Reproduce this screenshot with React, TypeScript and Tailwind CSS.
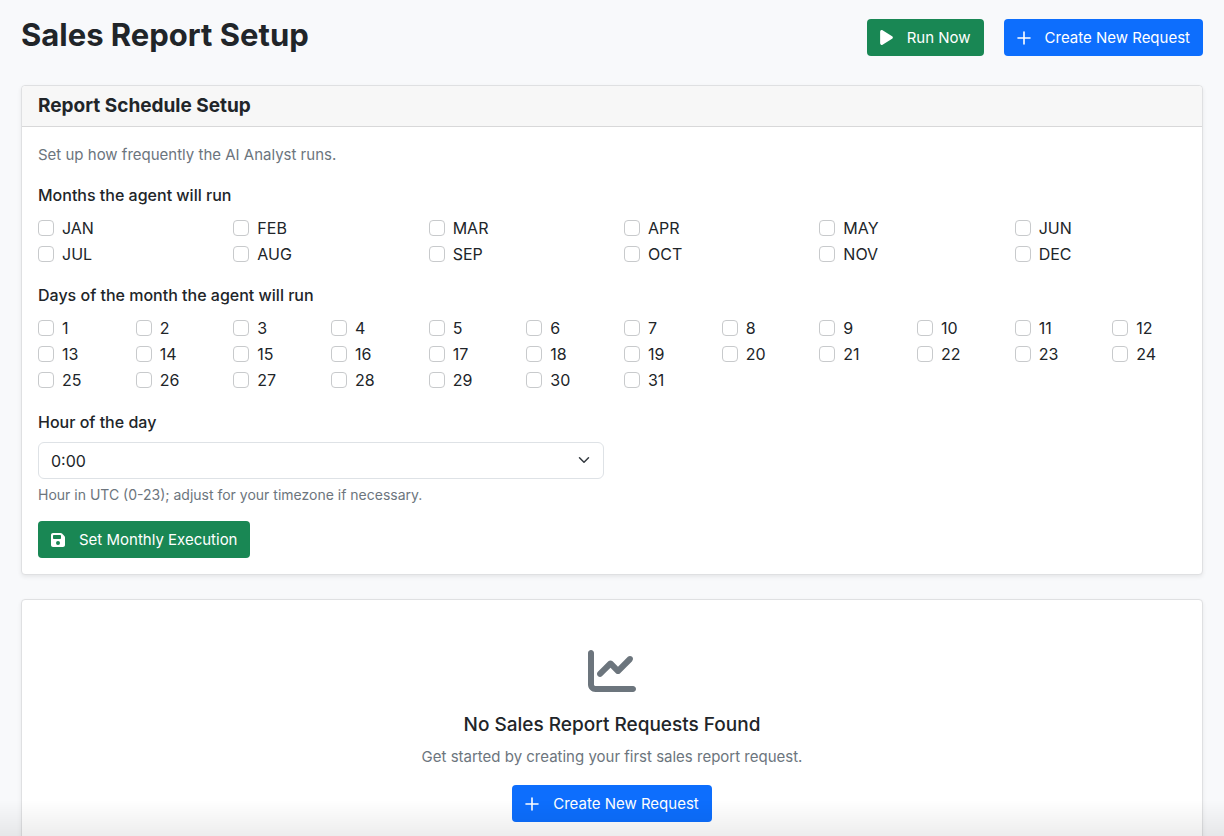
import { useState } from "react";
import type { ReactNode } from "react";

const MONTHS = ["JAN", "FEB", "MAR", "APR", "MAY", "JUN", "JUL", "AUG", "SEP", "OCT", "NOV", "DEC"];
const DAYS = Array.from({ length: 31 }, (_, i) => String(i + 1));
const HOURS = Array.from({ length: 24 }, (_, i) => `${i}:00`);

function PlayIcon() {
  return (
    <svg viewBox="0 0 384 512" className="h-[17px] w-[13px] shrink-0" fill="currentColor" aria-hidden="true">
      <path d="M73 39c-14.800-9.100-33.400-9.400-48.500-.9S0 62.600 0 80V432c0 17.400 9.400 33.400 24.500 41.900s33.700 8.100 48.500-.9L361 297c14.300-8.700 23-24.200 23-41s-8.700-32.200-23-41L73 39z" />
    </svg>
  );
}

function PlusIcon() {
  return (
    <svg viewBox="0 0 14 14" className="size-[14px] shrink-0" fill="none" stroke="currentColor" strokeWidth="1.600" strokeLinecap="round" aria-hidden="true">
      <path d="M7 1v12M1 7h12" />
    </svg>
  );
}

function SaveIcon() {
  return (
    <svg viewBox="0 32 448 448" className="size-[14px] shrink-0" fill="currentColor" aria-hidden="true">
      <path d="M64 32C28.700 32 0 60.700 0 96V416c0 35.300 28.700 64 64 64H384c35.300 0 64-28.700 64-64V173.300c0-17-6.700-33.300-18.700-45.300L352 50.700C340 38.700 323.700 32 306.700 32H64zm0 96c0-17.700 14.300-32 32-32H288c17.700 0 32 14.300 32 32v64c0 17.700-14.300 32-32 32H96c-17.700 0-32-14.300-32-32V128zM224 288a64 64 0 1 1 0 128 64 64 0 1 1 0-128z" />
    </svg>
  );
}

function ChartIcon() {
  return (
    <svg viewBox="0 0 512 512" className="size-12" fill="currentColor" aria-hidden="true">
      <path d="M64 64c0-17.700-14.300-32-32-32S0 46.300 0 64V400c0 44.200 35.800 80 80 80H480c17.700 0 32-14.300 32-32s-14.300-32-32-32H80c-8.800 0-16-7.200-16-16V64zm406.600 86.600c12.500-12.500 12.500-32.800 0-45.300s-32.800-12.500-45.300 0L320 210.700l-57.400-57.400c-12.500-12.500-32.800-12.500-45.300 0l-112 112c-12.500 12.500-12.500 32.800 0 45.300s32.800 12.500 45.300 0L240 221.300l57.400 57.400c12.500 12.500 32.800 12.500 45.300 0l128-128z" />
    </svg>
  );
}

function Button({ tone, icon, children }: { tone: "green" | "blue"; icon: ReactNode; children: ReactNode }) {
  const color = tone === "green" ? "bg-[#198754] hover:bg-[#157347]" : "bg-[#0d6efd] hover:bg-[#0b5ed7]";
  return (
    <button type="button" className={`inline-flex items-center gap-[14px] rounded px-[13px] py-[7px] text-[15px] leading-[23px] text-white ${color}`}>
      {icon}
      {children}
    </button>
  );
}

function Check({ group, label }: { group: string; label: string }) {
  const id = `${group}-${label}`;
  return (
    <div className="flex h-[26px] items-center gap-2">
      <input
        id={id}
        type="checkbox"
        className="size-4 shrink-0 appearance-none rounded border border-[#c8cacc] bg-white checked:border-[#0d6efd] checked:bg-[#0d6efd]"
      />
      <label htmlFor={id}>{label}</label>
    </div>
  );
}

export default function App() {
  const [hour, setHour] = useState("0:00");
  return (
    <div className="min-h-screen bg-[#f8f9fb] px-[21px] pt-[19px] font-['Inter','Liberation_Sans',sans-serif] text-base text-[#212529]">
      <header className="flex items-start justify-between">
        <h1 className="text-[31px] leading-8 font-bold">Sales Report Setup</h1>
        <div className="flex gap-5">
          <Button tone="green" icon={<PlayIcon />}>Run Now</Button>
          <Button tone="blue" icon={<PlusIcon />}>Create New Request</Button>
        </div>
      </header>

      <main className="pt-[29px]">
        <section className="rounded border border-[#dfe0e2] bg-white shadow-[0_2px_4px_rgba(0,0,0,0.075)]">
          <div className="rounded-t border-b border-[#d8d8d9] bg-[#f7f7f7] px-4 py-2">
            <h2 className="text-[19px] leading-6 font-bold">Report Schedule Setup</h2>
          </div>
          <form className="p-4" onSubmit={(e) => e.preventDefault()}>
            <p className="text-[15px] leading-6 text-[#6c757d]">Set up how frequently the AI Analyst runs.</p>

            <fieldset className="mt-4">
              <legend className="mb-2 leading-6 font-medium">Months the agent will run</legend>
              <div className="grid grid-cols-6 gap-x-6">
                {MONTHS.map((m) => <Check key={m} group="month" label={m} />)}
              </div>
            </fieldset>

            <fieldset className="mt-4">
              <legend className="mb-2 leading-6 font-medium">Days of the month the agent will run</legend>
              <div className="grid grid-cols-12 gap-x-6">
                {DAYS.map((d) => <Check key={d} group="day" label={d} />)}
              </div>
            </fieldset>

            <div className="mt-[17px] grid grid-cols-2 gap-4">
              <div>
                <label htmlFor="hour" className="block leading-6 font-medium">Hour of the day</label>
                <div className="relative mt-2">
                  <select
                    id="hour"
                    value={hour}
                    onChange={(e) => setHour(e.target.value)}
                    className="block h-[37px] w-full appearance-none rounded-md border border-[#dee2e6] bg-white pr-9 pl-3"
                  >
                    {HOURS.map((h) => <option key={h}>{h}</option>)}
                  </select>
                  <svg viewBox="0 0 16 16" className="pointer-events-none absolute top-3 right-[14px] size-3" fill="none" stroke="#343a40" strokeWidth="2" strokeLinecap="round" strokeLinejoin="round" aria-hidden="true">
                    <path d="m2 5 6 6 6-6" />
                  </svg>
                </div>
                <p className="mt-1 text-sm leading-6 text-[#6c757d]">Hour in UTC (0-23); adjust for your timezone if necessary.</p>
              </div>
            </div>

            <div className="mt-[14px] flex">
              <Button tone="green" icon={<SaveIcon />}>Set Monthly Execution</Button>
            </div>
          </form>
        </section>

        <section className="mt-6 flex flex-col items-center rounded border border-[#dfe0e2] bg-white px-4 pt-[47px] pb-12 shadow-[0_2px_4px_rgba(0,0,0,0.075)]">
          <span className="text-[#6c757d]"><ChartIcon /></span>
          <h2 className="mt-[18px] text-[19px] leading-6 font-medium">No Sales Report Requests Found</h2>
          <p className="mt-2 mb-4 text-[15px] leading-6 text-[#6c757d]">Get started by creating your first sales report request.</p>
          <Button tone="blue" icon={<PlusIcon />}>Create New Request</Button>
        </section>
      </main>

      <div className="pointer-events-none fixed inset-x-0 bottom-0 h-9 bg-linear-to-b from-transparent to-black/7" aria-hidden="true" />
    </div>
  );
}
